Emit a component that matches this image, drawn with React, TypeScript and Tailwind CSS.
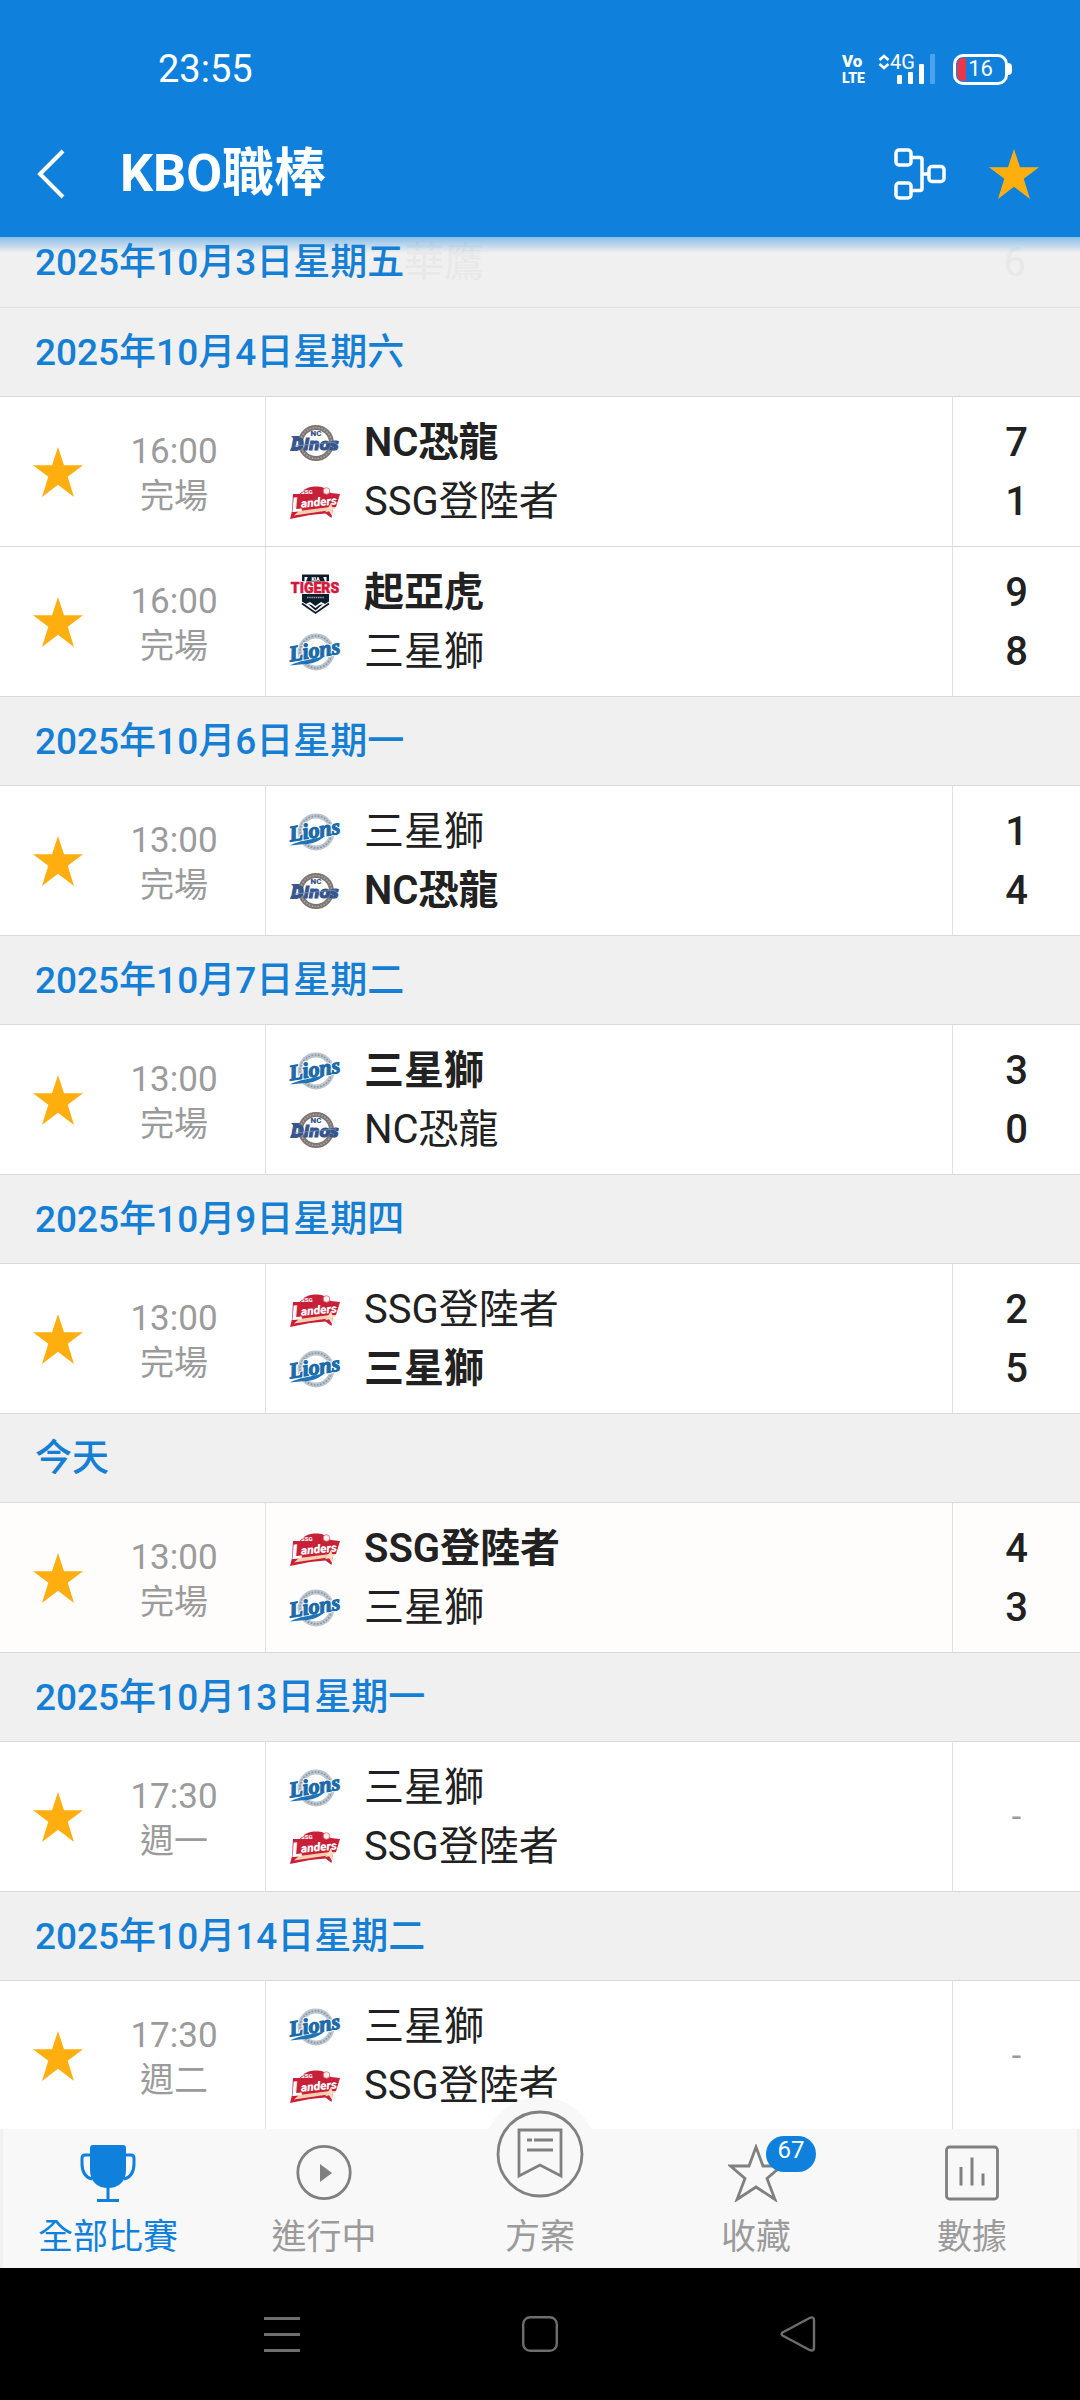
import React from 'react';

type TeamKey = 'nc' | 'ssg' | 'kia' | 'samsung';

type Side = { team: TeamKey; score?: number; winner?: boolean };
type Game = { time: string; status: string; sides: [Side, Side]; highlight?: boolean };
type Day = { title: string; games: Game[] };

const TEAM_NAMES: Record<TeamKey, string> = {
  nc: 'NC恐龍',
  ssg: 'SSG登陸者',
  kia: '起亞虎',
  samsung: '三星獅',
};

const DAYS: Day[] = [
  {
    title: '2025年10月4日星期六',
    games: [
      { time: '16:00', status: '完場', sides: [{ team: 'nc', score: 7, winner: true }, { team: 'ssg', score: 1 }] },
      { time: '16:00', status: '完場', sides: [{ team: 'kia', score: 9, winner: true }, { team: 'samsung', score: 8 }] },
    ],
  },
  {
    title: '2025年10月6日星期一',
    games: [{ time: '13:00', status: '完場', sides: [{ team: 'samsung', score: 1 }, { team: 'nc', score: 4, winner: true }] }],
  },
  {
    title: '2025年10月7日星期二',
    games: [{ time: '13:00', status: '完場', sides: [{ team: 'samsung', score: 3, winner: true }, { team: 'nc', score: 0 }] }],
  },
  {
    title: '2025年10月9日星期四',
    games: [{ time: '13:00', status: '完場', sides: [{ team: 'ssg', score: 2 }, { team: 'samsung', score: 5, winner: true }] }],
  },
  {
    title: '今天',
    games: [
      { time: '13:00', status: '完場', highlight: true, sides: [{ team: 'ssg', score: 4, winner: true }, { team: 'samsung', score: 3 }] },
    ],
  },
  {
    title: '2025年10月13日星期一',
    games: [{ time: '17:30', status: '週一', sides: [{ team: 'samsung' }, { team: 'ssg' }] }],
  },
  {
    title: '2025年10月14日星期二',
    games: [{ time: '17:30', status: '週二', sides: [{ team: 'samsung' }, { team: 'ssg' }] }],
  },
];

function DinosLogo() {
  return (
    <svg viewBox="0 0 50 40" className="h-10 w-[50px] overflow-visible" aria-hidden="true">
      <circle cx="26" cy="20" r="15.5" fill="#fff" stroke="#7d7672" strokeWidth="5" />
      <circle cx="26" cy="20" r="15.5" fill="none" stroke="#aaa39e" strokeWidth="1.6" strokeDasharray="1.6 1.4" />
      <text x="26" y="12.5" textAnchor="middle" fontFamily="Roboto, sans-serif" fontWeight="900" fontSize="8" fill="#2f4f86">NC</text>
      <g fontFamily="DejaVu Sans, sans-serif" fontWeight="700" fontStyle="italic" fontSize="15" fill="#36558c" stroke="#36558c" strokeWidth="1.2">
        <text x="25" y="26.5" textAnchor="middle">Dinos</text>
      </g>
      <path d="M1 13h9l-2 3H4zM1 25h8l-2 3H0z" fill="#36558c" />
      <path d="M4 23 46 19" stroke="#7d9ac6" strokeWidth="1" opacity=".7" />
    </svg>
  );
}

function LandersLogo() {
  return (
    <svg viewBox="0 0 50 40" className="h-10 w-[50px] overflow-visible" aria-hidden="true">
      <path d="M3 12h7C13 7 19 4.500 26 4.500c6 0 9 1.500 11 4l4 2.500 9 1-4 13-3 1-1.500 10-6-4.500L20 33 0 37l2-8z" fill="#c9203a" />
      <circle cx="36.500" cy="9" r="3.300" fill="#fdf1ec" stroke="#d8616f" strokeWidth=".8" />
      <path d="M4 33.500 9 29l31-4-2 3.500L21 31z" fill="#f8cfae" />
      <path d="m41 21 1.200 4 4.300.6-3.800 2.200-.8 6-2.800-4.500-4 .9 2.700-3.700z" fill="#fbdcc0" />
      <text x="11" y="12" fontFamily="Roboto, sans-serif" fontWeight="900" fontSize="6" fill="#fff">SSG</text>
      <g transform="rotate(-5 25 22)" fontFamily="Roboto, sans-serif" fontWeight="900" fontStyle="italic" fill="#fff">
        <text x="2" y="28" fontSize="20">L</text>
        <text x="11" y="24.500" fontSize="12">anders</text>
      </g>
    </svg>
  );
}

function TigersLogo() {
  return (
    <svg viewBox="0 0 50 40" className="h-10 w-[50px] overflow-visible" aria-hidden="true">
      <path d="M12 1.500h27V8l-2.500.5V4h-22v4.500L12 8z" fill="#0e1c2c" />
      <path d="M18 3.500h15l2 5H16z" fill="#0e1c2c" />
      <text x="25.500" y="7.800" textAnchor="middle" fontFamily="Roboto, sans-serif" fontWeight="900" fontSize="5" fill="#fff">KIA</text>
      <text x="25" y="19.500" textAnchor="middle" fontFamily="Roboto, sans-serif" fontWeight="900" fontSize="14" fill="#d5173c" stroke="#d5173c" strokeWidth=".5">TIGERS</text>
      <path d="M12 21h27v7.500L35 31l-4-2-5.500 4-5.500-4-4 2-4-2.500z" fill="#0e1c2c" />
      <path d="M17 24.500h17" stroke="#9aa5b1" strokeWidth="1.300" strokeDasharray="1.500 .7" />
      <path d="m12 30.500 13.500 9.500L39 30.500" fill="none" stroke="#0e1c2c" strokeWidth="1.800" />
      <path d="m18 31 3.500 1 4 3 4-3 3.500-1-7.500 6.500z" fill="#0e1c2c" />
    </svg>
  );
}

function LionsLogo() {
  return (
    <svg viewBox="0 0 50 40" className="h-10 w-[50px] overflow-visible" aria-hidden="true">
      <circle cx="26" cy="20" r="16" fill="#fff" stroke="#bcc5ce" strokeWidth="5" />
      <circle cx="26" cy="20" r="16" fill="none" stroke="#8796a4" strokeWidth="1.600" strokeDasharray="1.600 1.600" />
      <g transform="rotate(-9 25 22)" fontFamily="Liberation Serif, serif" fontWeight="700" fontStyle="italic" fontSize="22">
        <text x="25" y="25.500" textAnchor="middle" fill="none" stroke="#fff" strokeWidth="3">Lions</text>
        <text x="25" y="25.500" textAnchor="middle" fill="#1d6aa9" stroke="#1d6aa9" strokeWidth="1.200">Lions</text>
      </g>
      <path d="M0 33.500c9-5 20-5.500 35-9.500-6 5.500-13 8-20 8-5 .3-10 1-15 1.500z" fill="#1f74b8" />
    </svg>
  );
}

function TeamLogo({ team }: { team: TeamKey }) {
  if (team === 'nc') return <DinosLogo />;
  if (team === 'ssg') return <LandersLogo />;
  if (team === 'kia') return <TigersLogo />;
  return <LionsLogo />;
}

function Star() {
  return (
    <svg viewBox="0 0 50 50" className="size-[50px]" aria-hidden="true">
      <path d="M25 0l6 18.300h19L34.700 29.800 41 50 25 37.800 9 50l6.300-20.200L0 18.300h19z" fill="#ffae10" />
    </svg>
  );
}

function StatusBar() {
  return (
    <div className="flex items-center justify-between pr-[68px] pl-[158px] pt-[46px]">
      <time className="text-[38px] leading-[46px]">23:55</time>
      <div className="flex items-center">
        <svg viewBox="0 0 24 32" className="mr-3 h-8 w-6 overflow-visible" aria-label="VoLTE" role="img">
          <g fill="#fff" fontFamily="Roboto, sans-serif" fontWeight="900">
            <text x="0" y="14" fontSize="17">Vo</text>
            <text x="0" y="30" fontSize="14">LTE</text>
          </g>
        </svg>
        <svg viewBox="0 0 58 32" className="mr-[17px] h-8 w-[58px] overflow-visible" aria-label="4G" role="img">
          <path d="m1.500 7 4.500-4 4.500 4M1.500 11 6 15l4.500-4" fill="none" stroke="#fff" strokeWidth="2.500" />
          <text x="12" y="16" fontFamily="Roboto, sans-serif" fontSize="20" fill="#fff">4G</text>
          <rect x="19" y="22" width="5" height="9" rx="1" fill="#fff" />
          <rect x="30" y="19" width="5" height="12" rx="1" fill="#fff" />
          <rect x="41" y="11" width="5" height="20" rx="1" fill="#fff" />
          <rect x="52" y="1" width="5" height="30" rx="1" fill="#4ba3ee" />
        </svg>
        <div className="relative flex h-[31px] w-[55px] items-center justify-center rounded-[10px] border-3 border-white">
          <span className="absolute inset-y-px left-px w-[9px] rounded-l-md bg-[#e8384a]" />
          <span className="text-[22px] leading-6">16</span>
        </div>
        <span className="h-3 w-1 rounded-r-sm bg-white" />
      </div>
    </div>
  );
}

function Header() {
  return (
    <header className="relative z-20 bg-[#0f80dc] pb-[33px] text-white">
      <StatusBar />
      <div className="flex items-center pt-[52px] pr-[41px] pl-[37px]">
        <button type="button" aria-label="返回" className="mr-[55px]">
          <svg viewBox="0 0 28 52" className="h-[52px] w-7" aria-hidden="true">
            <path d="M26 3 3 26l23 23" fill="none" stroke="#fff" strokeWidth="4" />
          </svg>
        </button>
        <h1 className="flex-1 text-[52px] leading-[60px] font-bold">KBO職棒</h1>
        <button type="button" aria-label="對戰表" className="mr-[43px]">
          <svg viewBox="0 0 52 52" className="size-[52px]" fill="none" stroke="#fff" strokeWidth="3.500" aria-hidden="true">
            <rect x="2" y="2" width="15" height="15" rx="3" />
            <rect x="2" y="35" width="15" height="15" rx="3" />
            <rect x="35" y="18.500" width="15" height="15" rx="3" />
            <path d="M17 9.500h9q2 0 2 2v29q0 2-2 2h-9M28 26h7" />
          </svg>
        </button>
        <button type="button" aria-label="收藏聯賽"><Star /></button>
      </div>
      <div className="absolute inset-x-0 top-full h-4 bg-linear-to-b from-[#0f80dc]/45 to-transparent" />
    </header>
  );
}

function GameRow({ game }: { game: Game }) {
  const played = game.sides[0].score !== undefined;
  return (
    <li className={`flex items-stretch border-b border-[#d9d9d9] ${game.highlight ? 'bg-[#fffcfc]' : 'bg-white'}`}>
      <button type="button" aria-label="收藏比賽" className="flex w-[115px] shrink-0 items-center justify-center">
        <Star />
      </button>
      <div className="flex w-[151px] shrink-0 flex-col items-center justify-center border-r border-[#e0e0e0] pt-1 pr-8 text-[#9b9b9b]">
        <time className="text-[35px] leading-[45px]">{game.time}</time>
        <span className="text-[34px] leading-[45px]">{game.status}</span>
      </div>
      <div className="flex-1 pt-4 pb-[15px] pl-6">
        {game.sides.map((side) => (
          <div key={side.team} className="flex items-center gap-6">
            <TeamLogo team={side.team} />
            <span className={`text-[40px] leading-[59px] text-[#212121] ${side.winner ? 'font-semibold' : 'font-normal'}`}>
              {TEAM_NAMES[side.team]}
            </span>
          </div>
        ))}
      </div>
      <div className="flex w-[128px] shrink-0 flex-col items-center justify-center border-l border-[#e0e0e0]">
        {played ? (
          game.sides.map((side) => (
            <span key={side.team} className="text-[40px] leading-[59px] font-medium text-[#212121]">{side.score}</span>
          ))
        ) : (
          <span className="text-[34px] leading-[45px] text-[#9b9b9b]">-</span>
        )}
      </div>
    </li>
  );
}

function Tab({ label, active, children }: { label: string; active?: boolean; children: React.ReactNode }) {
  return (
    <a
      href="#"
      aria-current={active ? 'page' : undefined}
      className={`relative flex flex-1 flex-col items-center justify-end pb-[5px] ${active ? 'text-[#0f80dc]' : 'text-[#9b9b9b]'}`}
    >
      {children}
      <span className="text-[35px] leading-[50px]">{label}</span>
    </a>
  );
}

function TabBar() {
  return (
    <nav className="relative z-10 flex bg-[#f8f8f8] pt-[15px] shadow-[inset_3px_0_#f1f1f1,inset_-3px_0_#f1f1f1]">
      <Tab label="全部比賽" active>
        <svg viewBox="0 0 56 58" className="mb-[11px] h-[58px] w-14" aria-hidden="true">
          <path d="M13 1h30q3 0 3 3v22c0 12-8 18-18 18S10 38 10 26V4q0-3 3-3z" fill="#0f80dc" />
          <path d="M10 11H5q-3 0-3 3v6c0 8 4 14 10 15M46 11h5q3 0 3 3v6c0 8-4 14-10 15M28 43v13M17 56.500h22" fill="none" stroke="#0f80dc" strokeWidth="3" />
        </svg>
      </Tab>
      <Tab label="進行中">
        <svg viewBox="0 0 56 58" className="mb-[11px] h-[58px] w-14" aria-hidden="true">
          <circle cx="28" cy="28.500" r="26.200" fill="none" stroke="#808080" strokeWidth="2.800" />
          <path d="m24 20 12 9-12 9z" fill="#808080" />
        </svg>
      </Tab>
      <Tab label="方案">
        <span className="absolute bottom-[57px] flex size-[114px] items-center justify-center rounded-full bg-[#f8f8f8]">
          <svg viewBox="0 0 88 88" className="size-[88px]" fill="none" stroke="#808080" strokeWidth="2.800" aria-hidden="true">
            <circle cx="44" cy="44" r="42" />
            <path d="M23 20h42v46L44 55 23 66zM31 30h5M38 30h19M31 40h26" />
          </svg>
        </span>
      </Tab>
      <Tab label="收藏">
        <span className="relative mb-[11px]">
          <svg viewBox="0 0 56 58" className="h-[58px] w-14" aria-hidden="true">
            <path d="M28 3l7 19h18.500L39 34.500 47 55.500 28 43 9 55.500l8-21L2.500 22H21z" fill="none" stroke="#808080" strokeWidth="2.800" />
          </svg>
          <span className="absolute -top-2 left-[38px] h-9 w-[50px] rounded-full bg-[#0f80dc] text-center text-[24px] leading-[28px] text-white">
            67
          </span>
        </span>
      </Tab>
      <Tab label="數據">
        <svg viewBox="0 0 56 58" className="mb-[11px] h-[58px] w-14" fill="none" stroke="#808080" strokeWidth="2.800" aria-hidden="true">
          <rect x="2.500" y="3" width="51" height="52" rx="3" />
          <path d="M17 23v18.500M28 13.500v28M39 29.500v12" strokeWidth="3" />
        </svg>
      </Tab>
    </nav>
  );
}

function SystemNav() {
  return (
    <div className="z-10 flex justify-center gap-[222px] bg-black py-12">
      <button type="button" aria-label="最近使用">
        <svg viewBox="0 0 36 36" className="size-9" aria-hidden="true">
          <path d="M0 2.500h36M0 18.500h36M0 34.500h36" stroke="#6e6e6e" strokeWidth="3" />
        </svg>
      </button>
      <button type="button" aria-label="主畫面">
        <svg viewBox="0 0 36 36" className="size-9" aria-hidden="true">
          <rect x="1.200" y="1.200" width="33.600" height="33.600" rx="7" fill="none" stroke="#6e6e6e" strokeWidth="2.400" />
        </svg>
      </button>
      <button type="button" aria-label="返回上一頁">
        <svg viewBox="0 0 36 36" className="size-9" aria-hidden="true">
          <path d="M2.500 16.500 30 1.800q4-1.500 4 2.500v27.400q0 4-4 2.500L2.500 19.500q-2-1.500 0-3z" fill="none" stroke="#6e6e6e" strokeWidth="2.400" />
        </svg>
      </button>
    </div>
  );
}

export default function App() {
  return (
    <div className="flex h-screen flex-col overflow-hidden bg-[#f0f0f0] font-['Roboto','Noto_Sans_CJK_TC',sans-serif]">
      <Header />
      <main className="relative min-h-0 flex-1 overflow-hidden">
        <div className="flex items-start justify-between border-b border-[#e2e2e2] pt-0.5 pr-[54px] pb-5 pl-[35px]">
          <h2 className="text-[37px] leading-[48px] font-medium text-[#147fd4]">2025年10月3日星期五</h2>
          <div className="flex flex-1 justify-between text-[40px] leading-[48px] text-[#e8e8e8]" aria-hidden="true">
            <span>華鷹</span>
            <span>6</span>
          </div>
        </div>
        {DAYS.map((day) => (
          <section key={day.title}>
            <h2 className="border-b border-[#d9d9d9] bg-[#f0f0f0] pt-[21px] pb-[19px] pl-[35px] text-[37px] leading-[48px] font-medium text-[#147fd4]">
              {day.title}
            </h2>
            <ul>
              {day.games.map((game) => (
                <GameRow key={game.sides[0].team} game={game} />
              ))}
            </ul>
          </section>
        ))}
      </main>
      <TabBar />
      <SystemNav />
    </div>
  );
}
